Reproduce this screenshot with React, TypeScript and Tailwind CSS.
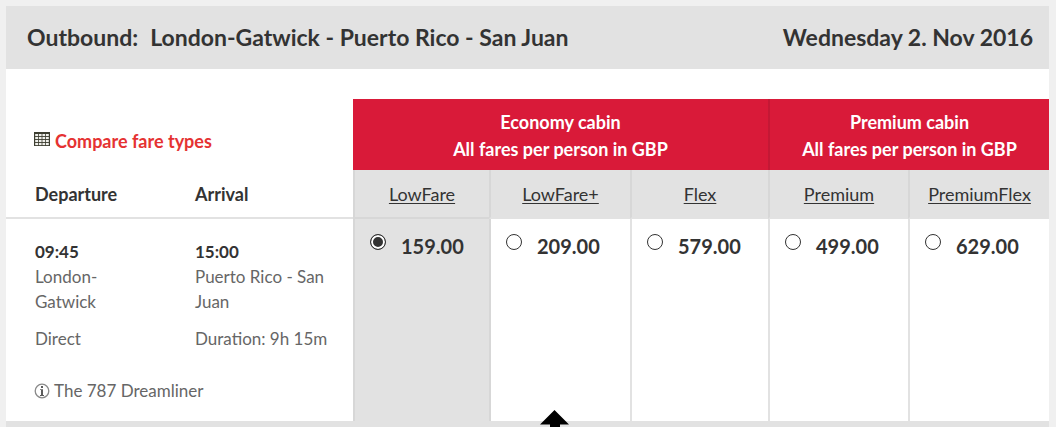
import { useState } from "react";

const fares = [
  { name: "LowFare", price: "159.00" },
  { name: "LowFare+", price: "209.00" },
  { name: "Flex", price: "579.00" },
  { name: "Premium", price: "499.00" },
  { name: "PremiumFlex", price: "629.00" },
];

function GridIcon() {
  return (
    <svg width="16" height="14" viewBox="0 0 16 14" className="mb-1 shrink-0" aria-hidden="true">
      <rect width="16" height="14" fill="#3d3e31" />
      {[2, 5, 8, 11].map((y) =>
        [1.2, 4.8, 8.4, 12].map((x) => (
          <rect key={`${x}-${y}`} x={x} y={y} width="2.8" height="2.1" fill="#f0f0ec" />
        )),
      )}
    </svg>
  );
}

function InfoIcon() {
  return (
    <svg width="16" height="16" viewBox="0 0 16 16" className="shrink-0" aria-hidden="true">
      <circle cx="8" cy="8" r="6.8" fill="#fff" stroke="#8a8a8a" strokeWidth="1.3" />
      <rect x="7" y="3" width="2" height="2" fill="#5c5c5c" />
      <path d="M6 6.2h3V12h1v1H6v-1h1V7H6z" fill="#5c5c5c" />
    </svg>
  );
}

function CabinHeader({ name, span, divided }: { name: string; span: number; divided?: boolean }) {
  return (
    <th
      scope="colgroup"
      colSpan={span}
      className={`h-[71px] bg-[#d91a39] p-0 pt-0.5 text-center align-middle text-lg leading-[27px] font-bold text-white ${
        divided ? "border-l-2 border-[#c41835]" : ""
      }`}
    >
      {name}
      <br />
      All fares per person in GBP
    </th>
  );
}

export default function App() {
  const [selected, setSelected] = useState("LowFare");

  return (
    <div className="relative min-h-screen bg-[#f0f0f0] pt-1.5 pr-[7px] pl-1.5 font-['Lato','Noto_Sans',sans-serif] text-[17px] text-[#333]">
      <main className="bg-white">
        <header className="flex h-[63px] items-center justify-between bg-[#e2e2e2] pr-4 pl-[21px] text-[23px] font-bold">
          <h1 className="flex gap-3">
            <span>Outbound:</span>
            <span>London-Gatwick - Puerto Rico - San Juan</span>
          </h1>
          <p>Wednesday 2. Nov 2016</p>
        </header>

        <table className="mt-[30px] w-full table-fixed border-separate border-spacing-0 text-left">
          <colgroup>
            <col className="w-[173px]" />
            <col className="w-[174px]" />
            <col className="w-[136px]" />
            <col className="w-[141px]" />
            <col className="w-[138px]" />
            <col className="w-[140px]" />
            <col className="w-[141px]" />
          </colgroup>
          <thead>
            <tr className="text-lg">
              <td colSpan={2} className="p-0 pt-3 pl-7 align-middle">
                <a href="#compare" className="flex items-center gap-[5px] font-bold text-[#e53232]">
                  <GridIcon />
                  Compare fare types
                </a>
              </td>
              <CabinHeader name="Economy cabin" span={3} />
              <CabinHeader name="Premium cabin" span={2} divided />
            </tr>
            <tr className="text-lg">
              <th scope="col" className="h-[49px] border-b-2 border-[#e2e2e2] p-0 pl-[29px] font-bold">
                Departure
              </th>
              <th scope="col" className="border-b-2 border-[#e2e2e2] p-0 pl-4 font-bold">
                Arrival
              </th>
              {fares.map((fare) => (
                <th
                  key={fare.name}
                  scope="col"
                  className={`border-b-2 border-l-2 border-l-[#d7d7d7] bg-[#e2e2e2] p-0 text-center font-normal ${
                    fare.name === selected ? "border-b-[#d7d7d7]" : "border-b-[#e2e2e2]"
                  }`}
                >
                  <a href={`#${fare.name}`} className="underline underline-offset-2">
                    {fare.name}
                  </a>
                </th>
              ))}
            </tr>
          </thead>
          <tbody>
            <tr className="align-top leading-[25px] text-[#666]">
              <td className="h-[143px] p-0 pt-[21px] pr-8 pl-[29px]">
                <time className="block leading-6 font-bold text-[#333]">09:45</time>
                <p>London-Gatwick</p>
                <p className="mt-3">Direct</p>
              </td>
              <td className="p-0 pt-[21px] pr-3 pl-4">
                <time className="block leading-6 font-bold text-[#333]">15:00</time>
                <p>Puerto Rico - San Juan</p>
                <p className="mt-3">Duration: 9h 15m</p>
              </td>
              {fares.map((fare, i) => {
                const active = fare.name === selected;
                const dark = active || (i > 0 && fares[i - 1].name === selected);
                return (
                  <td
                    key={fare.name}
                    rowSpan={2}
                    className={`border-l-2 p-0 pt-[13px] text-[#333] ${
                      dark ? "border-[#d7d7d7]" : "border-[#e2e2e2]"
                    } ${active ? "bg-[#e2e2e2]" : "bg-white"}`}
                  >
                    <label className="flex gap-[15px] pt-0.5 pl-[15px]">
                      <input
                        type="radio"
                        name="fare"
                        value={fare.name}
                        checked={active}
                        onChange={() => setSelected(fare.name)}
                        className="size-4 shrink-0 appearance-none rounded-full border border-[#333] bg-white checked:border-[#333] checked:bg-[#333] checked:inset-ring-2 checked:inset-ring-white"
                      />
                      <span className="text-xl leading-6 font-bold">{fare.price}</span>
                    </label>
                  </td>
                );
              })}
            </tr>
            <tr>
              <td colSpan={2} className="h-[59px] p-0 pb-0.5 pl-7 align-middle text-[#666]">
                <div className="flex items-center gap-1">
                  <InfoIcon />
                  The 787 Dreamliner
                </div>
              </td>
            </tr>
          </tbody>
        </table>
        <div className="h-1.5 bg-[#e2e2e2]" />
      </main>
      <svg
        width="30"
        height="17"
        viewBox="0 0 30 17"
        className="pointer-events-none absolute top-[410px] left-[540px]"
        aria-hidden="true"
      >
        <path d="M14.500 0 29 14.500h-9V17H10v-2.500H0z" fill="#000" />
      </svg>
    </div>
  );
}
